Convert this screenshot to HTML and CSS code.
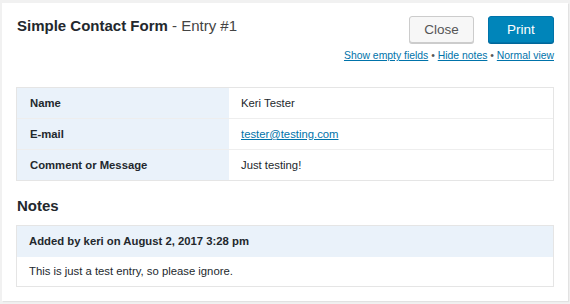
FILE: index.html
```html
<!DOCTYPE html>
<html lang="en">
<head>
    <meta charset="UTF-8">
    <title>Simple Contact Form - Entry #1</title>
    <link rel="stylesheet" href="styles.css">
</head>
<body>
    <div class="entry">
        <div class="entry-header">
            <h2 class="entry-title">Simple Contact Form <span class="entry-num">- Entry #1</span></h2>
            <div class="entry-actions">
                <div class="buttons">
                    <button class="btn btn-close">Close</button>
                    <button class="btn btn-print">Print</button>
                </div>
                <div class="view-links">
                    <a href="#">Show empty fields</a> &bull;
                    <a href="#">Hide notes</a> &bull;
                    <a href="#">Normal view</a>
                </div>
            </div>
        </div>

        <table class="fields">
            <tbody>
                <tr>
                    <th>Name</th>
                    <td>Keri Tester</td>
                </tr>
                <tr>
                    <th>E-mail</th>
                    <td><a href="#">tester@testing.com</a></td>
                </tr>
                <tr>
                    <th>Comment or Message</th>
                    <td>Just testing!</td>
                </tr>
            </tbody>
        </table>

        <h2 class="notes-title">Notes</h2>
        <div class="note">
            <div class="note-head">Added by keri on August 2, 2017 3:28 pm</div>
            <div class="note-body">This is just a test entry, so please ignore.</div>
        </div>
    </div>
</body>
</html>
```

FILE: styles.css
```css
html, body {
    margin: 0;
    padding: 0;
}
body {
    font-family: "Liberation Sans", Arial, sans-serif;
    background-color: #f1f1f1;
    color: #23282d;
    padding: 3px 2px;
    height: 304px;
    box-sizing: border-box;
}
a {
    color: #0073aa;
}
.entry {
    background: #fff;
    height: 298px;
    box-sizing: border-box;
    padding: 13px 14px 0 14px;
    box-shadow: 1px 1px 1px rgba(0,0,0,0.06);
}
.entry-header {
    display: flex;
    justify-content: space-between;
    align-items: flex-start;
}
.entry-title {
    margin: 1px 0 0 1px;
    font-size: 15px;
    font-weight: bold;
    color: #23282d;
}
.entry-num {
    font-weight: normal;
    color: #444;
}
.entry-actions {
    display: flex;
    flex-direction: column;
    align-items: flex-end;
}
.buttons {
    display: flex;
    gap: 14px;
}
.btn {
    font-family: "Liberation Sans", Arial, sans-serif;
    font-size: 13.5px;
    height: 27px;
    border-radius: 3px;
    padding: 0;
    cursor: pointer;
}
.btn-close {
    width: 65px;
    background: #f7f7f7;
    border: 1px solid #ccc;
    color: #555;
    box-shadow: 0 1px 0 #ccc;
}
.btn-print {
    width: 66px;
    background: #0085ba;
    border: 1px solid #0073aa;
    color: #fff;
    box-shadow: 0 1px 0 #006799;
}
.view-links {
    margin-top: 7px;
    font-size: 10.4px;
    color: #555;
}
.fields {
    width: 100%;
    border-collapse: separate;
    border-spacing: 0;
    margin-top: 26px;
    border: 1px solid #e5e5e5;
    font-size: 11.3px;
}
.fields th, .fields td {
    height: 30px;
    padding: 0 12px;
    border-bottom: 1px solid #eee;
    text-align: left;
}
.fields tr:last-child th, .fields tr:last-child td {
    border-bottom: none;
}
.fields th {
    width: 187px;
    background: #eaf2fa;
    font-weight: bold;
    padding-left: 13px;
}
.notes-title {
    margin: 16px 0 0 1px;
    font-size: 15px;
    font-weight: bold;
}
.note {
    margin-top: 11px;
    border: 1px solid #e5e5e5;
    font-size: 11.3px;
}
.note-head {
    background: #eaf2fa;
    font-weight: bold;
    height: 31px;
    line-height: 31px;
    padding-left: 12px;
}
.note-body {
    height: 29px;
    line-height: 29px;
    padding-left: 12px;
}
```
